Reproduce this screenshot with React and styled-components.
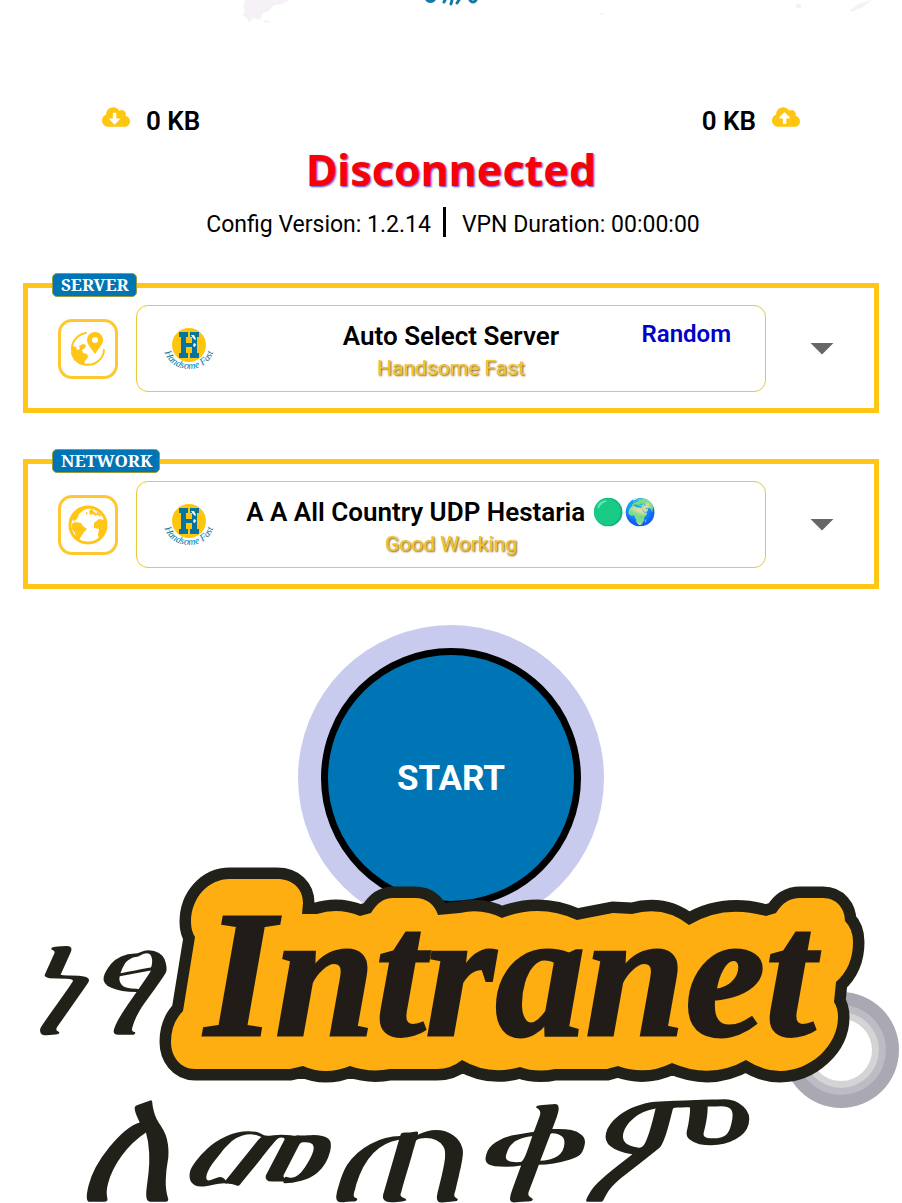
import React from 'react';
import styled, { createGlobalStyle } from 'styled-components';
import { FaCloudDownloadAlt, FaCloudUploadAlt } from 'react-icons/fa';

const GlobalStyle = createGlobalStyle`
  * { box-sizing: border-box; }
  body { margin: 0; background: #fff; font-family: Roboto, "Noto Sans", sans-serif; color: #000; }
`;
const Page = styled.main`display: flex; flex-direction: column; min-height: 100vh; overflow: hidden;`;
const Header = styled.header`
  height: 100px;
  svg { display: block; width: 100%; }
`;
const Traffic = styled.div`display: flex; justify-content: space-between; padding: 0 102px; height: 40px;`;
const Meter = styled.div`
  display: flex; gap: 16px; font-size: 26px; font-weight: 600; line-height: 42px;
  svg { width: 28px; height: 28px; margin-top: 3px; color: #ffc611; }
`;
const Status = styled.h1`
  margin: 7px 0 0; text-align: center; font: 700 43px/46px "Noto Sans", sans-serif; color: #f90008;
  text-shadow: 1px 1px 2px #5a3cc8;
`;
const Info = styled.div`
  display: flex; justify-content: center; gap: 10px; height: 36px; margin: 11px 0 33px; padding-left: 4px;
  font-size: 23px; line-height: 42px;
`;
const Divider = styled.span`width: 3px; height: 30px; margin: 3px 6px 0 2px; background: #000;`;
const Group = styled.fieldset`
  display: flex; align-items: center; min-width: 0;
  margin: 0 23px 36px; padding: 8px 40px 16px 30px; border: 5px solid #ffc517;
`;
const Tag = styled.legend`
  margin-left: -6px; padding: 0 7px 0 8px; border: 1px solid #9a9c3c; border-radius: 5px; background: #0075b5; color: #fff;
  font: 700 17px/22px "Noto Serif", "Liberation Serif", serif;
`;
const IconTile = styled.span`
  display: grid; place-items: center; flex: none; width: 60px; height: 60px; margin-right: 18px;
  border: 3px solid #ffc830; border-radius: 14px; color: #ffc517;
  svg { width: 42px; height: 42px; }
`;
const Choice = styled.button`
  display: grid; grid-template-columns: 96px 1fr 96px; flex: 1; height: 87px; padding: 0 8px;
  border: 1px solid #e6c83c; border-radius: 12px; background: #fff; color: #000; font-family: inherit; text-align: center;
`;
const LogoMark = styled.svg`width: 52px; height: 52px; margin: 16px 0 0 18px; overflow: visible;`;
const Labels = styled.span`display: flex; flex-direction: column; align-items: center; padding-top: 12px; white-space: nowrap;`;
const Name = styled.span`font-size: 26px; font-weight: 600; line-height: 36px;`;
const GreenEmoji = styled.span`filter: hue-rotate(58deg) saturate(1.4);`;
const Note = styled.span`font-size: 21px; line-height: 28px; color: #f5c32c; text-shadow: 1px 1px 2px #6b5000;`;
const Side = styled.span`
  justify-self: end; margin-right: 26px; padding-top: 10px; font-size: 24px; font-weight: 600; line-height: 36px; color: #0000c8;
`;
const Arrow = styled.span`
  width: 24px; height: 12px; margin-left: 44px; background: #666; clip-path: polygon(0 0, 100% 0, 50% 100%);
`;
const Start = styled.button`
  align-self: center; width: 306px; height: 306px; padding: 23px; border: 0; border-radius: 50%; background: #c8cbee;
  font: 700 35px Roboto, sans-serif; color: #fff;
`;
const StartFace = styled.span`
  display: grid; place-items: center; height: 100%; border: 7px solid #000; border-radius: 50%; background: #0075b5;
`;
const Promo = styled.svg`position: relative; display: block; width: 100%; margin-top: -76px;`;

const Splash = () => (
  <svg viewBox="0 0 902 28" aria-hidden="true">
    <path fill="#f6f1f6" d="M246 0h44l-8 4-8 1-5 6-6 2-3 7-7-2-4 5-3-6-4-2 3-4-2-5zM266 20l5 3-8-1zM850 10l10-7 12-3-9 7-12 5zM795 4h6v4h-4zM600 13l5 1-4 1z" />
    <path fill="none" stroke="#1678a8" strokeWidth="3" strokeLinecap="round" d="M427 0q4 3 7 0M444 2l1-2M451 4l1-4M457 3l2-3M470 0q3 4 6 0" />
  </svg>
);

const HandsomeLogo = ({ id }) => (
  <LogoMark viewBox="0 0 52 52">
    <circle cx="26" cy="23" r="17" fill="#ffc60f" />
    <path fill="#08739c" d="M16 10h9v5h-2v6h6v-6h-2v-5h9v5h-2v16h2v5h-9v-5h2v-6h-6v6h2v5h-9v-5h2V15h-2z" />
    <path fill="#fff" d="M28 13l3 0 2 4-1 1-2-2zM31 21l2 1-1 3-2-1z" />
    <path id={id} fill="none" d="M1 25a25 22 0 0 0 50 0" />
    <text fill="#08739c" fontFamily="Liberation Serif, serif" fontStyle="italic" fontSize="10">
      <textPath href={`#${id}`} startOffset="50%" textAnchor="middle">Handsome Fast</textPath>
    </text>
  </LogoMark>
);

const GlobePin = () => (
  <svg viewBox="0 0 42 42" fill="currentColor" aria-hidden="true">
    <path fill="none" stroke="currentColor" strokeWidth="2" strokeLinecap="round" d="M19 5A16 16 0 1 0 37 22" />
    <path d="M6 18l3 1 1 3 3-1-1-3 4-2 3 1-1 3-3 2 1 3 4 1 1 3-3 4-1 4-5-1-5-4-3-6z" />
    <path fillRule="evenodd" d="M28 4a8 8 0 0 1 8 8c0 5-5 9-8 14-3-5-8-9-8-14a8 8 0 0 1 8-8zm0 5a3 3 0 1 0 0 6 3 3 0 0 0 0-6z" />
  </svg>
);

const Globe = () => (
  <svg viewBox="0 0 42 42" fill="currentColor" aria-hidden="true">
    <circle cx="21" cy="21" r="18" fill="none" stroke="currentColor" strokeWidth="3" />
    <path d="M4 15l3-6 6-5 6-2 3 2-5 2-5 4-2 5-3 2zM8 18l6 1 2 3 4 3-3 3-2 3-3 5-3-2-1-5-3-4v-5zM27 19l5-4 6 1 1 8-3 7-4 4-1-4 1-6-5-1zM22 7l3-2 2 3 4 2-2 2-3-2-3 1zM19 8l2 1-2 2zM30 7l4 4-1 2-3-3z" />
  </svg>
);

function Selector({ tag, icon, logoId, name, note, side }) {
  return (
    <Group>
      <Tag>{tag}</Tag>
      <IconTile>{icon}</IconTile>
      <Choice type="button">
        <HandsomeLogo id={logoId} />
        <Labels><Name>{name}</Name><Note>{note}</Note></Labels>
        {side && <Side>{side}</Side>}
      </Choice>
      <Arrow />
    </Group>
  );
}

const STICKER = `M230 879H277C293 879 303 889 303 903L302 914L317 914Q338 907 360 916L371 913C377 903 384 898 393 898H415
C427 898 435 905 438 915L460 913Q482 908 502 918Q540 903 577 920L587 918L613 913L632 914Q664 905 689 925Q723 904 766 916
L776 913C782 903 790 898 800 898H823C837 898 845 909 845 921Q853 929 853 942Q853 967 836 982L834 1002Q838 1008 838 1017
C838 1046 810 1071 780 1071Q763 1071 746 1060Q711 1080 672 1063Q646 1076 618 1066L607 1069H555Q536 1073 520 1067
Q489 1076 462 1060Q451 1069 437 1069H390Q370 1073 350 1066Q325 1076 303 1066L290 1069H195C180 1069 171 1056 171 1042
Q171 1023 183 1011L195 937Q191 931 191 922C191 898 208 879 230 879Z`;

export default function App() {
  return (
    <Page>
      <GlobalStyle />
      <Header><Splash /></Header>
      <Traffic>
        <Meter><FaCloudDownloadAlt />0 KB</Meter>
        <Meter>0 KB<FaCloudUploadAlt /></Meter>
      </Traffic>
      <Status>Disconnected</Status>
      <Info><span>Config Version: 1.2.14</span><Divider /><span>VPN Duration: 00:00:00</span></Info>
      <Selector tag="SERVER" icon={<GlobePin />} logoId="server-arc" name="Auto Select Server" note="Handsome Fast" side="Random" />
      <Selector
        tag="NETWORK" icon={<Globe />} logoId="network-arc" note="Good Working"
        name={<>A A All Country UDP Hestaria <GreenEmoji>🟢</GreenEmoji>🌍</>}
      />
      <Start type="button"><StartFace>START</StartFace></Start>
      <Promo viewBox="0 855 902 348">
        <g>
          <circle cx="841" cy="1050" r="58" fill="#a9a8b3" />
          <circle cx="841" cy="1050" r="45" fill="#bbbcc4" />
          <circle cx="841" cy="1050" r="38" fill="#d4d4d5" />
          <circle cx="841" cy="1050" r="31" fill="#fff" />
        </g>
        <path d={STICKER} fill="none" stroke="#212119" strokeWidth="23" />
        <path d={STICKER} fill="#ffae12" />
        <g fontStyle="italic" fill="#212119">
          <text x="22" y="1035" fontFamily="Noto Sans, sans-serif" fontSize="154">ነፃ</text>
          <text x="76" y="1202" fontFamily="Noto Sans, sans-serif" fontSize="168">ለመጠቀም</text>
          <text x="205" y="1035" fontFamily="Liberation Serif, serif" fontWeight="700" fontSize="180" fill="#211c17" stroke="#211c17" strokeWidth="3">Intranet</text>
        </g>
      </Promo>
    </Page>
  );
}
